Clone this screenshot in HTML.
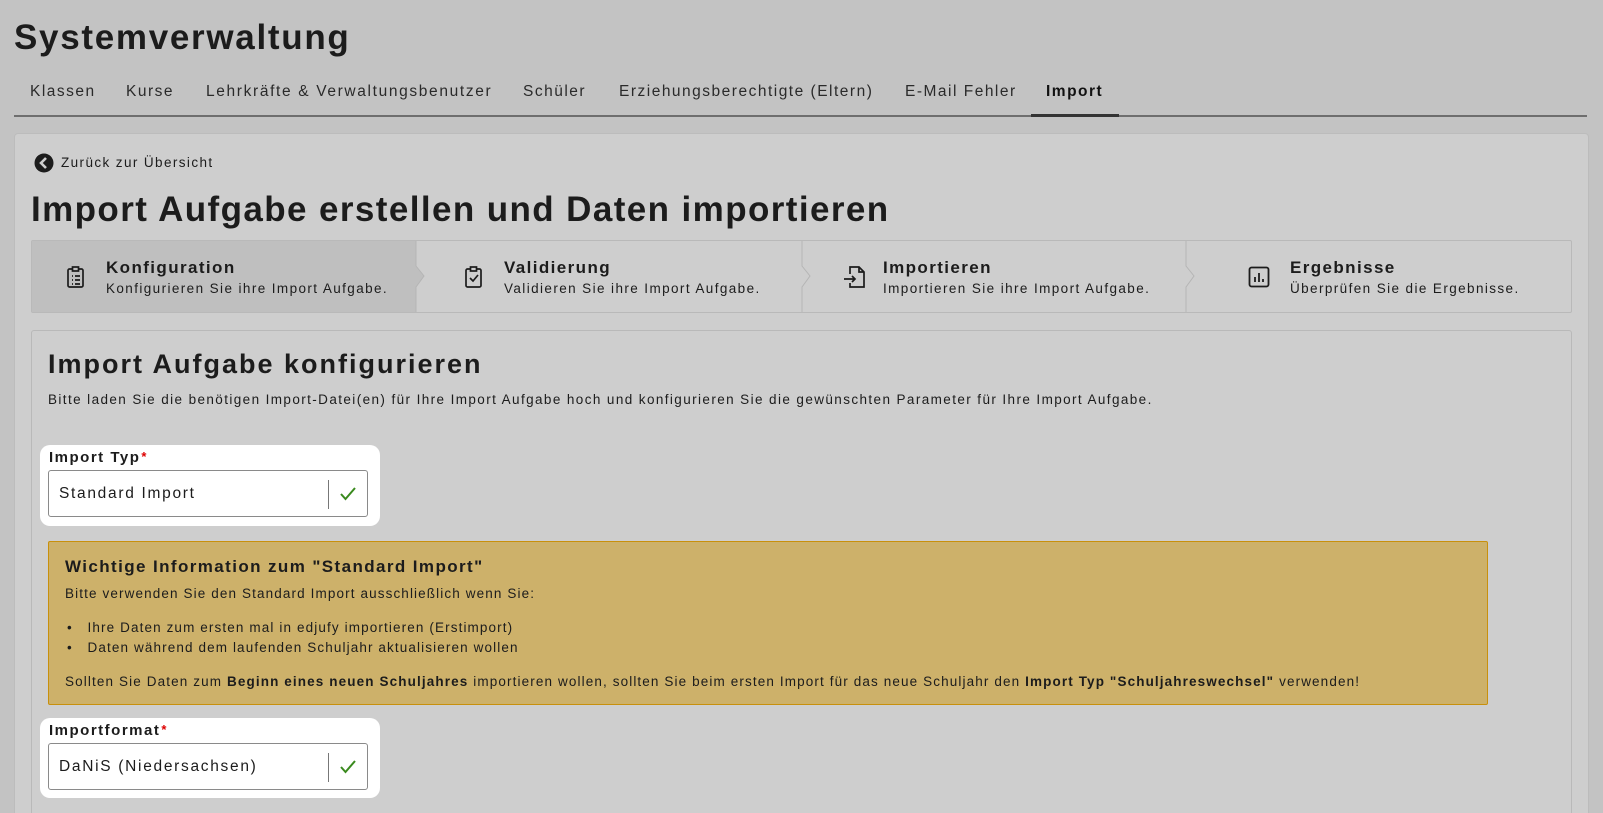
<!DOCTYPE html>
<html style="width:1603px;height:813px;overflow:hidden;background:#c3c3c3"><head><meta charset="utf-8"><style>
*{box-sizing:border-box;margin:0;padding:0}
body{width:1603px;height:813px;overflow:hidden;background:#c3c3c3;font-family:"Liberation Sans",sans-serif;color:#1c1c1c;position:relative;letter-spacing:1.4px}
.a{position:absolute;white-space:nowrap}
.tab{position:absolute;top:83px;font-size:15.5px;color:#2a2a2a;letter-spacing:1.5px}
.step{position:absolute;top:240px;height:73px}
.st{font-weight:bold;font-size:17px;letter-spacing:1.4px}
.ss{font-size:13.5px;margin-top:3px;letter-spacing:1.4px}
.hl{position:absolute;left:40px;width:340px;background:#fff;border-radius:10px}
.inp{position:absolute;left:8px;width:320px;height:47px;border:1px solid #8a8a8a;border-radius:3px;background:#fff;font-size:15.5px;padding:14px 0 0 10px;letter-spacing:1.7px}
.inp .sep{position:absolute;right:38px;top:9px;width:1px;height:29px;background:#777}
.inp svg{position:absolute;right:11px;top:16px}
.lab{position:absolute;left:9px;top:4px;font-weight:bold;font-size:15px;letter-spacing:1.5px}
.lab b{color:#d00;font-size:13px;vertical-align:top;margin-left:1px}
.inf{font-size:13.5px;letter-spacing:1.12px}
</style></head><body>
<div class="a" style="left:14px;top:18px;font-size:35px;font-weight:bold;letter-spacing:1.7px">Systemverwaltung</div>
<div class="tab" style="left:30px">Klassen</div>
<div class="tab" style="left:126px">Kurse</div>
<div class="tab" style="left:206px;letter-spacing:1.65px">Lehrkräfte &amp; Verwaltungsbenutzer</div>
<div class="tab" style="left:523px">Schüler</div>
<div class="tab" style="left:619px">Erziehungsberechtigte (Eltern)</div>
<div class="tab" style="left:905px">E-Mail Fehler</div>
<div class="tab" style="left:1046px;font-weight:bold;color:#111">Import</div>
<div class="a" style="left:14px;top:115px;width:1573px;height:2px;background:#6e6e6e"></div>
<div class="a" style="left:1031px;top:114px;width:88px;height:3px;background:#333"></div>

<div class="a" style="left:14px;top:133px;width:1575px;height:690px;background:#cecece;border:1px solid #bcbcbc;border-radius:4px"></div>
<svg class="a" style="left:34px;top:153px" width="20" height="20" viewBox="0 0 20 20"><circle cx="10" cy="10" r="9.5" fill="#1c1c1c"/><path d="M12 5L7 10l5 5" stroke="#cecece" stroke-width="2.6" fill="none"/></svg>
<div class="a" style="left:61px;top:155px;font-size:13.5px">Zurück zur Übersicht</div>
<div class="a" style="left:31px;top:190px;font-size:35px;font-weight:bold;letter-spacing:1.4px">Import Aufgabe erstellen und Daten importieren</div>

<div class="a" style="left:31px;top:240px;width:1541px;height:73px;border:1px solid #b9b9b9;border-radius:2px"></div>
<div class="a" style="left:32px;top:241px;width:384px;height:71px;background:#bfbfbf"></div>
<svg class="a" style="left:409px;top:241px" width="16" height="71"><path d="M7 0L7 25L15 35L7 46L7 71" stroke="#b5b5b5" fill="#bfbfbf"/></svg>
<svg class="a" style="left:795px;top:241px" width="16" height="71"><path d="M7 0L7 25L15 35L7 46L7 71" stroke="#b5b5b5" fill="#cecece"/></svg>
<svg class="a" style="left:1179px;top:241px" width="16" height="71"><path d="M7 0L7 25L15 35L7 46L7 71" stroke="#b5b5b5" fill="#cecece"/></svg>
<svg class="a" style="left:66px;top:265px" width="20" height="24" viewBox="0 0 20 24" fill="none" stroke="#1c1c1c" stroke-width="1.7"><rect x="2" y="4" width="15" height="18" rx="1.5"/><rect x="6.5" y="2" width="6" height="4" fill="#bfbfbf"/><path d="M6 11h1M9 11h5M6 15h1M9 15h5M6 19h1M9 19h5"/></svg>
<div class="a step" style="left:106px;top:258px"><div class="st">Konfiguration</div><div class="ss">Konfigurieren Sie ihre Import Aufgabe.</div></div>
<svg class="a" style="left:464px;top:265px" width="20" height="24" viewBox="0 0 20 24" fill="none" stroke="#1c1c1c" stroke-width="1.7"><rect x="2" y="4" width="15" height="18" rx="1.5"/><rect x="6.5" y="2" width="6" height="4" fill="#cecece"/><path d="M6 13l3 3 5-6"/></svg>
<div class="a step" style="left:504px;top:258px"><div class="st">Validierung</div><div class="ss">Validieren Sie ihre Import Aufgabe.</div></div>
<svg class="a" style="left:843px;top:265px" width="24" height="24" viewBox="0 0 24 24" fill="none" stroke="#1c1c1c" stroke-width="1.7"><path d="M7 9V2h9l5 5v15H7v-4M16 2v5h5M1 14h11M9 11l3 3-3 3"/></svg>
<div class="a step" style="left:883px;top:258px"><div class="st">Importieren</div><div class="ss">Importieren Sie ihre Import Aufgabe.</div></div>
<svg class="a" style="left:1248px;top:266px" width="22" height="22" viewBox="0 0 22 22" fill="none" stroke="#1c1c1c" stroke-width="1.8"><rect x="1.5" y="1.5" width="19" height="19" rx="2"/><path d="M7 16v-5M11 16V7M15 16v-3"/></svg>
<div class="a step" style="left:1290px;top:258px"><div class="st">Ergebnisse</div><div class="ss">Überprüfen Sie die Ergebnisse.</div></div>

<div class="a" style="left:31px;top:330px;width:1541px;height:490px;border:1px solid #b9b9b9;border-radius:3px"></div>
<div class="a" style="left:48px;top:349px;font-size:27px;font-weight:bold;letter-spacing:2px">Import Aufgabe konfigurieren</div>
<div class="a" style="left:48px;top:392px;font-size:13.5px;letter-spacing:1.4px">Bitte laden Sie die benötigen Import-Datei(en) für Ihre Import Aufgabe hoch und konfigurieren Sie die gewünschten Parameter für Ihre Import Aufgabe.</div>

<div class="hl" style="top:445px;height:81px"><div class="lab">Import Typ<b>*</b></div><div class="inp" style="top:25px">Standard Import<div class="sep"></div><svg width="16" height="14" viewBox="0 0 16 14"><path d="M1 7l4.5 5L15 1" stroke="#3a8a1e" stroke-width="2" fill="none"/></svg></div></div>

<div class="a" style="left:48px;top:541px;width:1440px;height:164px;background:#cdb16a;border:1px solid #c8900c;border-radius:2px"></div>
<div class="a" style="left:65px;top:557px;font-size:17px;font-weight:bold;letter-spacing:1.4px">Wichtige Information zum "Standard Import"</div>
<div class="a inf" style="left:65px;top:586px">Bitte verwenden Sie den Standard Import ausschließlich wenn Sie:</div>
<div class="a inf" style="left:67px;top:620px">•&nbsp;&nbsp;&nbsp;Ihre Daten zum ersten mal in edjufy importieren (Erstimport)</div>
<div class="a inf" style="left:67px;top:640px">•&nbsp;&nbsp;&nbsp;Daten während dem laufenden Schuljahr aktualisieren wollen</div>
<div class="a inf" style="left:65px;top:674px">Sollten Sie Daten zum <b>Beginn eines neuen Schuljahres</b> importieren wollen, sollten Sie beim ersten Import für das neue Schuljahr den <b>Import Typ "Schuljahreswechsel"</b> verwenden!</div>

<div class="hl" style="top:718px;height:80px"><div class="lab">Importformat<b>*</b></div><div class="inp" style="top:25px">DaNiS (Niedersachsen)<div class="sep"></div><svg width="16" height="14" viewBox="0 0 16 14"><path d="M1 7l4.5 5L15 1" stroke="#3a8a1e" stroke-width="2" fill="none"/></svg></div></div>
</body></html>
